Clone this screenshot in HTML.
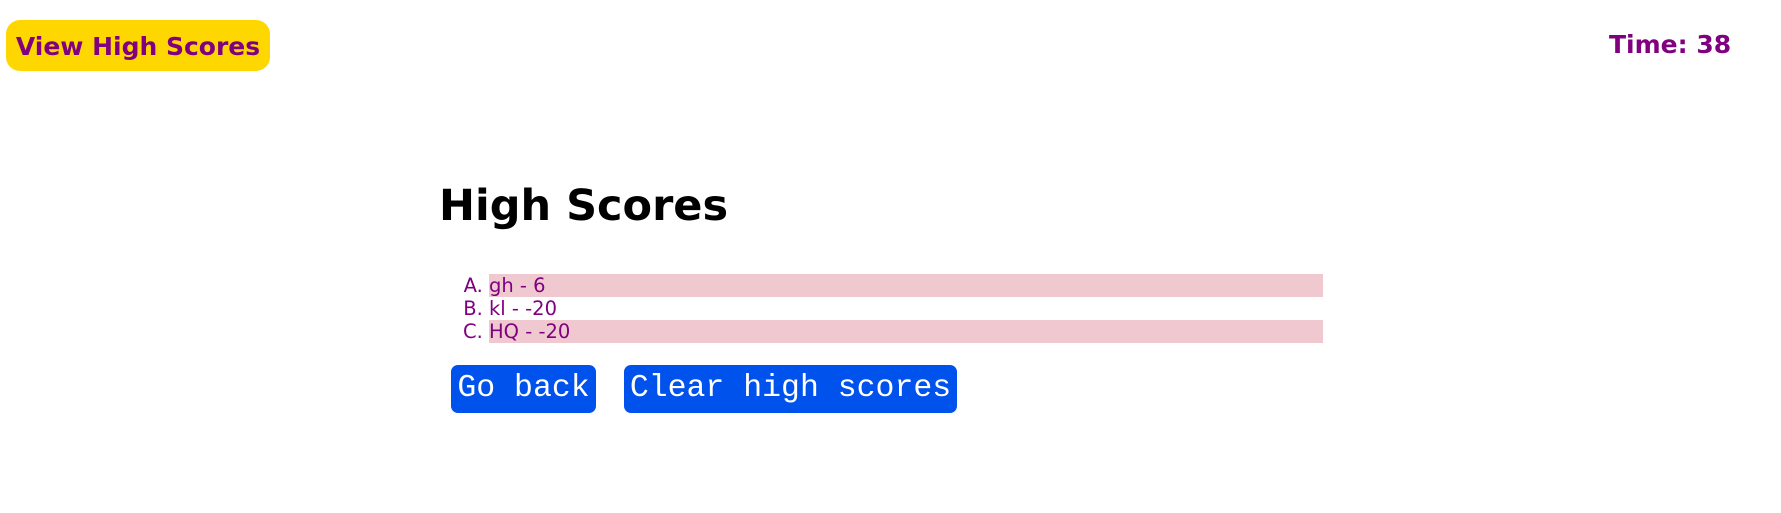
<!DOCTYPE html>
<html><head><style>
html,body{margin:0;padding:0;background:#fff;width:1781px;height:513px;overflow:hidden;font-family:"DejaVu Sans","Liberation Sans",sans-serif;}
.vh{position:absolute;left:6px;top:20px;width:264px;height:51px;background:#FFD700;border-radius:14px;color:#800080;font-weight:bold;font-size:25px;line-height:53px;text-align:center;}
.time{position:absolute;left:1609px;top:28px;color:#800080;font-weight:bold;font-size:25px;line-height:34px;}
h1{position:absolute;left:439px;top:176px;margin:0;font-size:43px;line-height:60px;font-weight:bold;color:#000;letter-spacing:0;}
ol{position:absolute;left:489px;top:274px;margin:0;padding:0 0 0 0;list-style:upper-alpha;width:834px;color:#800080;font-size:19.5px;}
li{height:23px;line-height:23px;}
li.p{background:#f0c8d0;}
.btn{position:absolute;top:365px;height:48px;background:#0052ec;border-radius:7px;color:#fff;font-family:"Liberation Mono",monospace;font-size:31.5px;line-height:48px;text-align:center;}
</style></head><body>
<div class="vh">View High Scores</div>
<div class="time">Time: 38</div>
<h1>High Scores</h1>
<ol><li class="p">gh - 6</li><li>kl - -20</li><li class="p">HQ - -20</li></ol>
<div class="btn" style="left:451px;width:145px">Go back</div>
<div class="btn" style="left:624px;width:333px">Clear high scores</div>
</body></html>
